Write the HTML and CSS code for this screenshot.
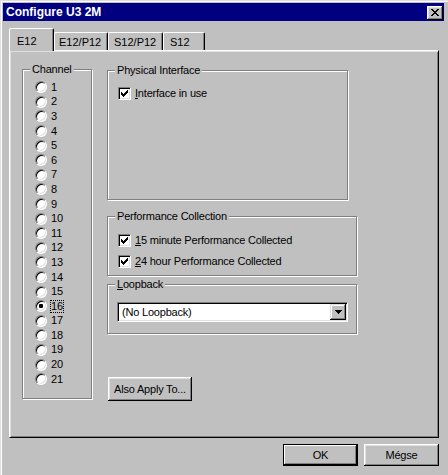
FILE: index.html
```html
<!DOCTYPE html>
<html>
<head>
<meta charset="utf-8">
<link rel="stylesheet" href="styles.css">
</head>
<body>
<div class="window">
  <div class="titlebar">
    <span class="title">Configure U3 2M</span>
    <span class="close"><svg width="8" height="7" viewBox="0 0 8 7" shape-rendering="crispEdges"><path d="M0 0h2v1H0zM6 0h2v1H6zM1 1h2v1H1zM5 1h2v1H5zM2 2h4v1H2zM3 3h2v1H3zM2 4h4v1H2zM1 5h2v1H1zM5 5h2v1H5zM0 6h2v1H0zM6 6h2v1H6z"/></svg></span>
  </div>
  <div class="content">
    <div class="tabs">
      <div class="tab selected">E12</div>
      <div class="tab t2">E12/P12</div>
      <div class="tab t3">S12/P12</div>
      <div class="tab t4">S12</div>
    </div>
    <div class="panel">
      <div class="group channel">
        <span class="legend">Channel</span>
        <div class="rrow"><span class="radio"></span><span class="rlabel">1</span></div>
        <div class="rrow"><span class="radio"></span><span class="rlabel">2</span></div>
        <div class="rrow"><span class="radio"></span><span class="rlabel">3</span></div>
        <div class="rrow"><span class="radio"></span><span class="rlabel">4</span></div>
        <div class="rrow"><span class="radio"></span><span class="rlabel">5</span></div>
        <div class="rrow"><span class="radio"></span><span class="rlabel">6</span></div>
        <div class="rrow"><span class="radio"></span><span class="rlabel">7</span></div>
        <div class="rrow"><span class="radio"></span><span class="rlabel">8</span></div>
        <div class="rrow"><span class="radio"></span><span class="rlabel">9</span></div>
        <div class="rrow"><span class="radio"></span><span class="rlabel">10</span></div>
        <div class="rrow"><span class="radio"></span><span class="rlabel">11</span></div>
        <div class="rrow"><span class="radio"></span><span class="rlabel">12</span></div>
        <div class="rrow"><span class="radio"></span><span class="rlabel">13</span></div>
        <div class="rrow"><span class="radio"></span><span class="rlabel">14</span></div>
        <div class="rrow"><span class="radio"></span><span class="rlabel">15</span></div>
        <div class="rrow"><span class="radio on"></span><span class="rlabel focus">16</span></div>
        <div class="rrow"><span class="radio"></span><span class="rlabel">17</span></div>
        <div class="rrow"><span class="radio"></span><span class="rlabel">18</span></div>
        <div class="rrow"><span class="radio"></span><span class="rlabel">19</span></div>
        <div class="rrow"><span class="radio"></span><span class="rlabel">20</span></div>
        <div class="rrow"><span class="radio"></span><span class="rlabel">21</span></div>
      </div>
      <div class="rightcol">
        <div class="group physical">
          <span class="legend">Physical Interface</span>
          <div class="crow"><span class="check"><svg width="7" height="7" viewBox="0 0 7 7" shape-rendering="crispEdges"><path d="M6 0h1v1H6zM5 1h2v1H5zM0 2h1v1H0zM4 2h3v1H4zM0 3h2v1H0zM3 3h3v1H3zM0 4h5v1H0zM1 5h3v1H1zM2 6h1v1H2z"/></svg></span><span class="clabel"><u>I</u>nterface in use</span></div>
        </div>
        <div class="group perf">
          <span class="legend">Performance Collection</span>
          <div class="crow"><span class="check"><svg width="7" height="7" viewBox="0 0 7 7" shape-rendering="crispEdges"><path d="M6 0h1v1H6zM5 1h2v1H5zM0 2h1v1H0zM4 2h3v1H4zM0 3h2v1H0zM3 3h3v1H3zM0 4h5v1H0zM1 5h3v1H1zM2 6h1v1H2z"/></svg></span><span class="clabel"><u>1</u>5 minute Performance Collected</span></div>
          <div class="crow"><span class="check"><svg width="7" height="7" viewBox="0 0 7 7" shape-rendering="crispEdges"><path d="M6 0h1v1H6zM5 1h2v1H5zM0 2h1v1H0zM4 2h3v1H4zM0 3h2v1H0zM3 3h3v1H3zM0 4h5v1H0zM1 5h3v1H1zM2 6h1v1H2z"/></svg></span><span class="clabel"><u>2</u>4 hour Performance Collected</span></div>
        </div>
        <div class="group loop">
          <span class="legend"><u>L</u>oopback</span>
          <div class="select">
            <span class="seltext">(No Loopback)</span>
            <span class="ddbtn"><svg width="7" height="4" viewBox="0 0 7 4" shape-rendering="crispEdges"><path d="M0 0h7v1H0zM1 1h5v1H1zM2 2h3v1H2zM3 3h1v1H3z"/></svg></span>
          </div>
        </div>
        <div class="btn apply">Also Apply To...</div>
      </div>
    </div>
    <div class="footer">
      <div class="btn default">OK</div>
      <div class="btn">Mégse</div>
    </div>
  </div>
</div>
</body>
</html>
```
FILE: styles.css
```css
* { box-sizing: border-box; }
body {
  margin: 0;
  background: #c0c0c0;
  font-family: "Liberation Sans", Arial, sans-serif;
  font-size: 11px;
  letter-spacing: -0.2px;
  color: #000;
}
.window {
  width: 448px;
  height: 475px;
  padding: 2px 0 0 2px;
  border-top: 1px solid #dfdfdf;
  border-left: 1px solid #dfdfdf;
  box-shadow: inset 1px 1px #fff;
  overflow: hidden;
}
.titlebar {
  width: 441px;
  height: 18px;
  background: #000080;
  color: #fff;
  display: flex;
  align-items: center;
  padding: 0 1px 0 3px;
  font-weight: bold;
  font-size: 12px;
  letter-spacing: 0;
}
.title { flex: 1; }
.close {
  width: 16px;
  height: 14px;
  margin-top: 1px;
  display: flex;
  align-items: center;
  justify-content: center;
  background: #c0c0c0;
  box-shadow: inset -1px -1px #000, inset 1px 1px #fff, inset -2px -2px #808080, inset 2px 2px #dfdfdf;
}
.content { margin-left: 6px; }
.tabs {
  display: flex;
  align-items: flex-end;
  height: 22px;
  margin-top: 7px;
}
.tab {
  height: 18px;
  border-top: 1px solid #fff;
  border-left: 1px solid #fff;
  border-right: 1px solid #000;
  border-radius: 2px 2px 0 0;
  box-shadow: inset -1px 0 #808080;
  padding: 3px 0 0 5px;
  line-height: 13px;
  white-space: nowrap;
  letter-spacing: 0;
}
.tab.selected {
  width: 45px;
  height: 23px;
  margin-bottom: -1px;
  padding: 6px 0 0 7px;
  background: #c0c0c0;
  position: relative;
  z-index: 1;
}
.t2 { width: 54px; padding-left: 4px; }
.t3 { width: 55px; padding-left: 5px; }
.t4 { width: 42px; padding-left: 6px; }
.panel {
  width: 430px;
  height: 388px;
  border: 1px solid;
  border-color: #fff #000 #000 #fff;
  box-shadow: inset 1px 1px #dfdfdf, inset -1px -1px #808080;
  display: flex;
  align-items: flex-start;
  padding: 18px 0 0 12px;
}
.group {
  position: relative;
  border: 1px solid #808080;
  box-shadow: 1px 1px 0 #fff, inset 1px 1px 0 #fff;
}
.legend {
  position: absolute;
  top: -7px;
  left: 7px;
  padding: 0 2px;
  line-height: 13px;
  background: #c0c0c0;
  white-space: nowrap;
}
.channel {
  width: 70px;
  height: 330px;
  padding: 10px 0 0 12px;
}
.rrow {
  display: flex;
  align-items: center;
  height: 14.6px;
}
.radio {
  position: relative;
  flex: none;
  width: 12px;
  height: 12px;
  border-radius: 50%;
  background: #fff;
  border: 1px solid;
  border-color: #808080 #fff #fff #808080;
  box-shadow: inset 1px 1px #000, inset -1px -1px #dfdfdf;
}
.radio.on::after {
  content: "";
  position: absolute;
  left: 3px;
  top: 3px;
  width: 4px;
  height: 4px;
  border-radius: 1px;
  background: #000;
}
.rlabel {
  margin-left: 3px;
  border: 1px solid transparent;
  line-height: 11px;
  letter-spacing: 0;
}
.rlabel.focus { border: 1px dotted #000; }
.rightcol {
  margin-left: 15px;
  padding-top: 1px;
  display: flex;
  flex-direction: column;
  align-items: flex-start;
}
.physical {
  width: 241px;
  height: 130px;
  padding: 16px 0 0 10px;
}
.perf {
  width: 250px;
  height: 60px;
  margin-top: 16px;
  padding: 17px 0 0 10px;
  display: flex;
  flex-direction: column;
  gap: 8px;
}
.loop {
  width: 250px;
  height: 50px;
  margin-top: 8px;
  padding: 17px 0 0 9px;
}
.crow {
  display: flex;
  align-items: center;
  height: 13px;
}
.check {
  flex: none;
  width: 13px;
  height: 13px;
  display: flex;
  align-items: center;
  justify-content: center;
  background: #fff;
  border: 1px solid;
  border-color: #808080 #fff #fff #808080;
  box-shadow: inset 1px 1px #000, inset -1px -1px #dfdfdf;
}
.clabel {
  margin-left: 4px;
  line-height: 13px;
  white-space: nowrap;
}
.select {
  width: 231px;
  height: 20px;
  background: #fff;
  border: 1px solid;
  border-color: #808080 #fff #fff #808080;
  box-shadow: inset 1px 1px #000, inset -1px -1px #dfdfdf;
  display: flex;
  align-items: center;
  padding: 1px;
}
.seltext { flex: 1; padding-left: 3px; line-height: 13px; }
.ddbtn {
  width: 16px;
  height: 16px;
  display: flex;
  align-items: center;
  justify-content: center;
  background: #c0c0c0;
  box-shadow: inset -1px -1px #000, inset 1px 1px #dfdfdf, inset -2px -2px #808080, inset 2px 2px #fff;
}
.btn {
  display: flex;
  align-items: center;
  justify-content: center;
  background: #c0c0c0;
  box-shadow: inset -1px -1px #000, inset 1px 1px #fff, inset -2px -2px #808080, inset 2px 2px #dfdfdf;
  white-space: nowrap;
}
.apply {
  width: 84px;
  height: 24px;
  margin-top: 43px;
  margin-left: 1px;
}
.footer {
  width: 430px;
  display: flex;
  justify-content: flex-end;
  gap: 6px;
  margin-top: 6px;
}
.footer .btn {
  width: 75px;
  height: 22px;
}
.footer .btn.default {
  border: 1px solid #000;
  box-shadow: inset -1px -1px #000, inset 1px 1px #fff, inset -2px -2px #808080;
}
```
